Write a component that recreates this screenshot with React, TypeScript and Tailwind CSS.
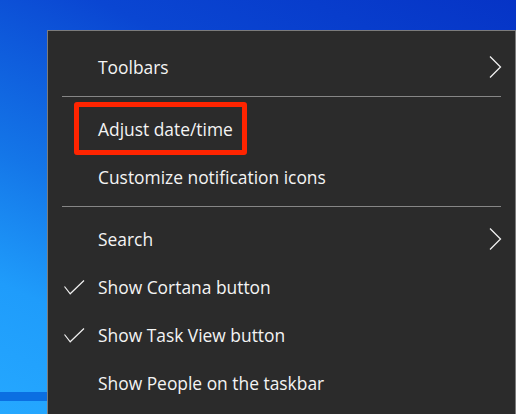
import React from "react";

type Item = { label: string; checked?: boolean; submenu?: boolean; highlight?: boolean };

const groups: Item[][] = [
    [{ label: "Toolbars", submenu: true }],
    [{ label: "Adjust date/time", highlight: true }, { label: "Customize notification icons" }],
    [
        { label: "Search", submenu: true },
        { label: "Show Cortana button", checked: true },
        { label: "Show Task View button", checked: true },
        { label: "Show People on the taskbar" },
    ],
];

function Check() {
    return (
        <svg width="21" height="15" viewBox="0 0 21 15" fill="none">
            <path d="M0.5 6.5L6.2 13.8L20 0.5" stroke="#f0f0f0" strokeWidth="1.2" />
        </svg>
    );
}

function Chevron() {
    return (
        <svg width="13" height="22" viewBox="0 0 13 22" fill="none">
            <path d="M1 0.5L11.5 11L1 21.5" stroke="#f0f0f0" strokeWidth="1.3" />
        </svg>
    );
}

function Row({ item }: { item: Item }) {
    return (
        <div className="relative flex h-12 items-center">
            <div className="flex w-[50px] justify-center pl-[2px]">{item.checked && <Check />}</div>
            <span className="flex-1 text-[17.4px] text-[#f4f4f4]">{item.label}</span>
            <div className="flex w-[26px]">{item.submenu && <Chevron />}</div>
            {item.highlight && (
                <div className="absolute left-[26px] top-[-3px] h-[53px] w-[173px] rounded-[3px] border-[5px] border-[#ff2400]" />
            )}
        </div>
    );
}

export default function App() {
    return (
        <div
            className="flex h-[414px] w-[516px] flex-col overflow-hidden bg-[linear-gradient(205deg,#0634c6_0%,#0a46d2_30%,#1476e8_60%,#1f9cfb_80%,#25a8ff_100%)]"
            style={{ fontFamily: '"Open Sans", "Noto Sans", sans-serif' }}
        >
            <div className="h-[30px] shrink-0" />
            <div className="flex flex-1">
                <div className="flex w-[47px] shrink-0 flex-col">
                    <div className="h-[362px]" />
                    <div className="h-[9px] bg-[#0b6fe2]" />
                </div>
                <div className="h-[420px] flex-1 border border-b-0 border-[#7c7c7c] bg-[#2b2b2b] pt-3">
                    {groups.map((g, gi) => (
                        <div key={gi}>
                            {gi > 0 && (
                                <div className="flex h-[14px] pt-[5px]">
                                    <div className="ml-[14px] mr-[14px] h-px flex-1 bg-[#868686]" />
                                </div>
                            )}
                            {g.map((item) => (
                                <Row key={item.label} item={item} />
                            ))}
                        </div>
                    ))}
                </div>
            </div>
        </div>
    );
}
